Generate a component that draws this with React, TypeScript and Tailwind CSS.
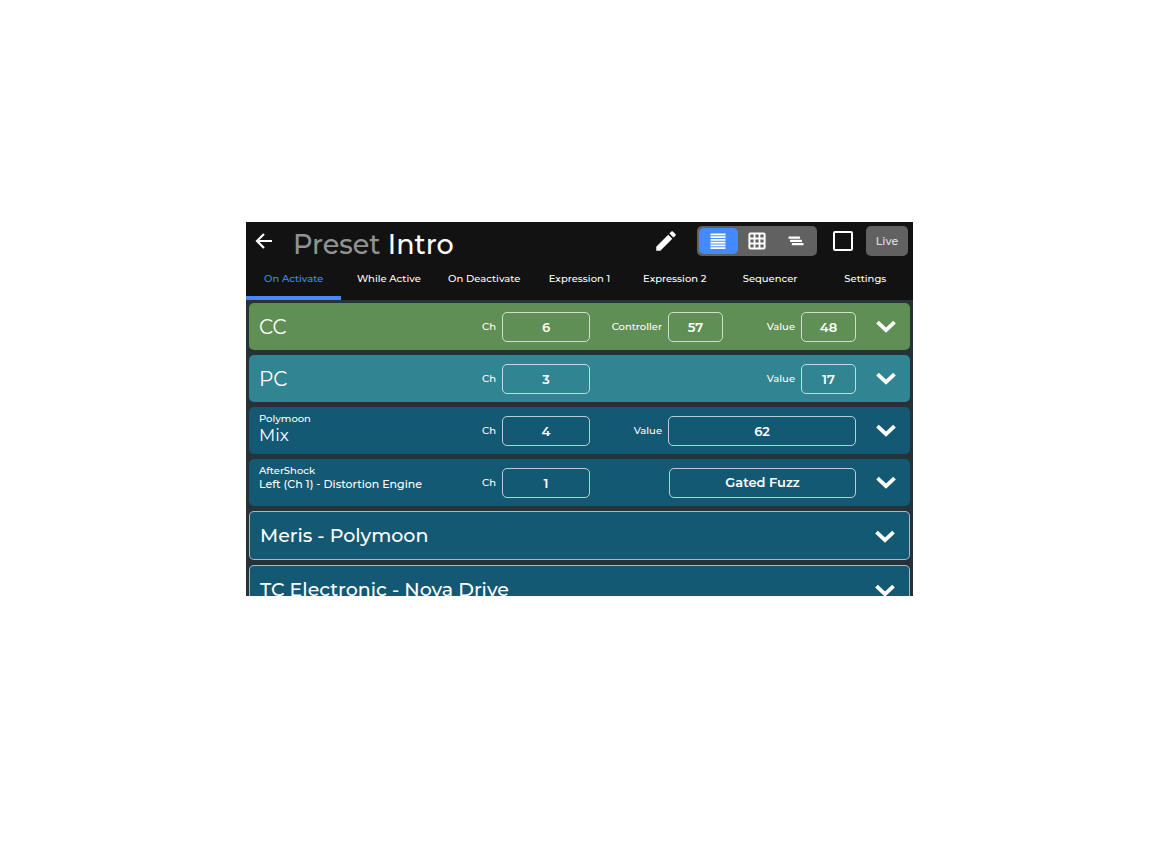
import React, { useState } from "react";
import { MdEdit } from "react-icons/md";

type Field = { label?: string; value: string; options?: string[]; wide?: boolean };

type Message = {
    id: string;
    device?: string;
    title: string;
    titleSize: string;
    color: string;
    channel: string;
    fields: Field[];
};

const TABS = [
    "On Activate",
    "While Active",
    "On Deactivate",
    "Expression 1",
    "Expression 2",
    "Sequencer",
    "Settings",
];

const MESSAGES: Message[] = [
    {
        id: "cc",
        title: "CC",
        titleSize: "text-[20px] leading-6 font-normal",
        color: "bg-[#5f8f55]",
        channel: "6",
        fields: [
            { label: "Controller", value: "57" },
            { label: "Value", value: "48" },
        ],
    },
    {
        id: "pc",
        title: "PC",
        titleSize: "text-[20px] leading-6 font-normal",
        color: "bg-[#318492]",
        channel: "3",
        fields: [{ label: "Value", value: "17" }],
    },
    {
        id: "polymoon",
        device: "Polymoon",
        title: "Mix",
        titleSize: "text-[17px] leading-[18px] font-normal",
        color: "bg-[#145974]",
        channel: "4",
        fields: [{ label: "Value", value: "62", wide: true }],
    },
    {
        id: "aftershock",
        device: "AfterShock",
        title: "Left (Ch 1) - Distortion Engine",
        titleSize: "text-[11px] leading-3",
        color: "bg-[#145974]",
        channel: "1",
        fields: [{ value: "Gated Fuzz", options: ["Gated Fuzz"], wide: true }],
    },
];

const DEVICES = ["Meris - Polymoon", "TC Electronic - Nova Drive"];

const BOX =
    "h-[30px] appearance-none rounded-[5px] border border-white/70 bg-transparent text-center text-[13px] font-semibold text-white";

function BackIcon() {
    return (
        <svg width="18" height="18" viewBox="0 0 18 18" fill="none" aria-hidden="true">
            <path d="M17 9H2.5M9 2 2 9l7 7" stroke="white" strokeWidth="2.2" />
        </svg>
    );
}

function Chevron() {
    return (
        <svg width="20" height="14" viewBox="0 0 20 14" fill="none" aria-hidden="true">
            <path d="M1.5 2.2 10 10.2 18.5 2.2" stroke="white" strokeWidth="3.8" />
        </svg>
    );
}

function LinesIcon() {
    return (
        <svg width="16" height="16" viewBox="0 0 16 16" fill="white" aria-hidden="true">
            {[0, 1, 2, 3, 4, 5].map((i) => (
                <rect key={i} x="0.5" y={0.5 + i * 2.75} width="15" height="1.8" />
            ))}
        </svg>
    );
}

function GridIcon() {
    return (
        <svg width="18" height="18" viewBox="0 0 18 18" fill="none" stroke="white" aria-hidden="true">
            <rect x="1.4" y="1.4" width="15.2" height="15.2" rx="1" strokeWidth="2" />
            <path d="M6.5 1v16M11.5 1v16M1 6.5h16M1 11.5h16" strokeWidth="1.8" />
        </svg>
    );
}

function StepsIcon() {
    return (
        <svg width="16" height="10" viewBox="0 0 16 10" fill="white" aria-hidden="true">
            <rect x="0.5" y="0.5" width="11.5" height="2.2" rx="0.5" />
            <rect x="2" y="3.8" width="12" height="2.2" rx="0.5" />
            <rect x="3.8" y="7.1" width="11.7" height="2.2" rx="0.5" />
        </svg>
    );
}

function MessageRow({ message }: { message: Message }) {
    const { id, device, title, titleSize, color, channel, fields } = message;

    return (
        <div className={`flex h-[47px] shrink-0 items-center rounded-[5px] ${color}`}>
            <div className={`min-w-0 flex-1 pl-[10px] ${device ? "self-start pt-[5px]" : ""}`}>
                {device && <p className="text-[10px] leading-[14px]">{device}</p>}
                <h2 className={titleSize}>{title}</h2>
            </div>

            <div className="flex items-center gap-[6px]">
                <label htmlFor={`${id}-ch`} className="text-[10px]">
                    Ch
                </label>
                <input id={`${id}-ch`} defaultValue={channel} className={`w-[88px] ${BOX}`} />
            </div>

            <div className="grid w-[266px] grid-cols-2">
                {fields.map((field, i) => (
                    <div
                        key={i}
                        className={`flex items-center justify-end gap-[6px] ${field.wide ? "col-span-2" : "even:col-start-2"} ${fields.length === 1 && !field.wide ? "col-start-2" : ""}`}
                    >
                        {field.label && (
                            <label htmlFor={`${id}-${i}`} className="text-[10px]">
                                {field.label}
                            </label>
                        )}
                        {field.options ? (
                            <select id={`${id}-${i}`} aria-label={title} className={`w-[187px] ${BOX}`}>
                                {field.options.map((option) => (
                                    <option key={option}>{option}</option>
                                ))}
                            </select>
                        ) : (
                            <input
                                id={`${id}-${i}`}
                                defaultValue={field.value}
                                className={`${field.wide ? "w-[188px]" : "w-[55px]"} ${BOX}`}
                            />
                        )}
                    </div>
                ))}
            </div>

            <button aria-label={`Expand ${title}`} className="ml-[5px] flex w-[49px] justify-center">
                <Chevron />
            </button>
        </div>
    );
}

export default function App() {
    const [tab, setTab] = useState("On Activate");
    const [view, setView] = useState("list");

    const views = [
        { name: "list", icon: <LinesIcon /> },
        { name: "grid", icon: <GridIcon /> },
        { name: "steps", icon: <StepsIcon /> },
    ];

    return (
        <div className="h-screen bg-white pt-[222px] pr-[241px] pb-[270px] pl-[246px] font-['Montserrat','Inter',sans-serif] font-medium text-white">
            <main className="flex h-full flex-col bg-[#263238]">
                <header className="bg-[#121212]">
                    {/* Title bar */}
                    <div className="flex h-[38px] items-center pr-[5px] pl-[9px]">
                        <button aria-label="Back">
                            <BackIcon />
                        </button>
                        <h1 className="flex-1 pt-[7px] pl-5 text-[27px] leading-8 font-medium">
                            <span className="text-[#929292]">Preset</span> Intro
                        </h1>
                        <button aria-label="Edit name" className="mr-[18px]">
                            <MdEdit size={26} />
                        </button>
                        <div className="mr-4 flex h-[30px] w-[120px] rounded-[5px] bg-[#616161] p-[2px]">
                            {views.map(({ name, icon }) => (
                                <button
                                    key={name}
                                    aria-label={`${name} view`}
                                    onClick={() => setView(name)}
                                    className={`flex flex-1 items-center justify-center rounded-[5px] ${view === name ? "bg-[#448aff]" : ""}`}
                                >
                                    {icon}
                                </button>
                            ))}
                        </div>
                        <input
                            type="checkbox"
                            aria-label="Select preset"
                            className="mr-[13px] size-5 appearance-none rounded-[2px] border-2 border-white checked:bg-white"
                        />
                        <button className="h-[30px] w-[42px] rounded-[5px] bg-[#616161] text-[11px] text-[#e0e0e0]">
                            Live
                        </button>
                    </div>

                    {/* Tabs */}
                    <nav className="grid h-10 grid-cols-7">
                        {TABS.map((name) => (
                            <button
                                key={name}
                                onClick={() => setTab(name)}
                                className={`border-b-4 text-[10px] whitespace-nowrap ${tab === name ? "border-[#448aff] text-[#448aff]" : "border-transparent"}`}
                            >
                                {name}
                            </button>
                        ))}
                    </nav>
                </header>

                {/* Messages */}
                <section className="flex min-h-0 flex-1 flex-col gap-[5px] overflow-y-auto px-[3px] pt-[3px] [scrollbar-width:none]">
                    {MESSAGES.map((message) => (
                        <MessageRow key={message.id} message={message} />
                    ))}
                    {DEVICES.map((device) => (
                        <button
                            key={device}
                            className="flex h-[49px] shrink-0 items-center justify-between rounded-[5px] border border-white/60 bg-[#145974] pt-[2px] pr-[14px] pl-[10px] text-left text-[19px]"
                        >
                            {device}
                            <Chevron />
                        </button>
                    ))}
                </section>
            </main>
        </div>
    );
}
